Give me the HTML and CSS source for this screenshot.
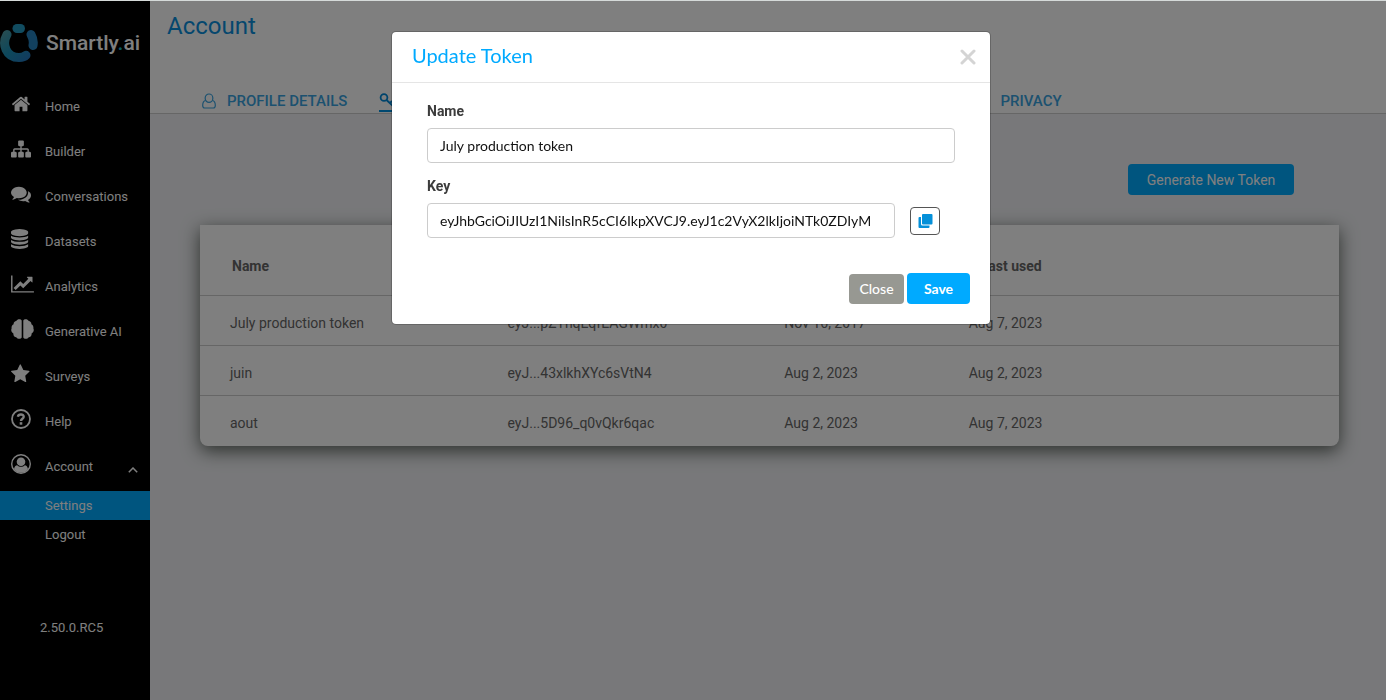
FILE: index.html
```html
<!DOCTYPE html>
<html lang="en">
<head>
<meta charset="utf-8">
<title>Smartly.ai - Account</title>
<link rel="stylesheet" href="styles.css">
</head>
<body>
<div class="app">
  <aside class="sidebar">
    <a class="brand" href="#">
      <svg class="brand-mark" viewBox="0 0 38 40" aria-hidden="true">
        <defs><linearGradient id="mark" gradientUnits="userSpaceOnUse" x1="6" y1="8" x2="30" y2="34"><stop offset="0" stop-color="#4a9aa6"/><stop offset=".5" stop-color="#1a90b8"/><stop offset="1" stop-color="#2478bc"/></linearGradient></defs>
        <g fill="none" stroke="url(#mark)" stroke-linecap="round" stroke-width="9">
          <path d="M7 11.500C1.500 21 6 34.500 19 34.500C22 34.500 24.500 33.800 26 32.200"/>
          <path d="M31 11.500C33 15 33.800 18.500 33 22.500" stroke="#2480bc"/>
          <path d="M17 5.500H20.500" stroke="#2398c0"/>
        </g>
      </svg>
      <span class="brand-name">Smartly<span class="brand-dot">.</span>ai</span>
    </a>
    <nav class="menu">
      <a class="menu-item" href="#"><svg class="menu-icon" viewBox="0 0 1792 1792"><path d="M1472 992v480q0 26-19 45t-45 19h-384v-384h-256v384h-384q-26 0-45-19t-19-45v-480q0-1 .5-3t.5-3l575-474 575 474q1 2 1 6zm223-69l-62 74q-8 9-21 11h-3q-13 0-21-7l-692-577-692 577q-12 8-24 7-13-2-21-11l-62-74q-8-10-7-23.500t11-21.500l719-599q32-26 76-26t76 26l244 204v-195q0-14 9-23t23-9h192q14 0 23 9t9 23v408l219 182q10 8 11 21.500t-7 23.500z"/></svg>Home</a>
      <a class="menu-item" href="#"><svg class="menu-icon" viewBox="0 0 1792 1792"><path d="M1792 1248v320q0 40-28 68t-68 28h-320q-40 0-68-28t-28-68v-320q0-40 28-68t68-28h96v-192h-512v192h96q40 0 68 28t28 68v320q0 40-28 68t-68 28h-320q-40 0-68-28t-28-68v-320q0-40 28-68t68-28h96v-192h-512v192h96q40 0 68 28t28 68v320q0 40-28 68t-68 28h-320q-40 0-68-28t-28-68v-320q0-40 28-68t68-28h96v-192q0-52 38-90t90-38h512v-192h-96q-40 0-68-28t-28-68v-320q0-40 28-68t68-28h320q40 0 68 28t28 68v320q0 40-28 68t-68 28h-96v192h512q52 0 90 38t38 90v192h96q40 0 68 28t28 68z"/></svg>Builder</a>
      <a class="menu-item" href="#"><svg class="menu-icon" viewBox="0 0 1792 1792"><path d="M1408 768q0 139-94 257t-256.500 186.500-353.500 68.500q-86 0-176-16-124 88-278 128-36 9-86 16h-3q-11 0-20.500-8t-11.500-21q-1-3-1-6.500t.5-6.500 2-6l2.500-5 3.500-5.500 4-5 4.500-5 4-4.500q5-6 23-25t26-29.500 22.500-29 25-38.500 20.500-44q-124-72-195-177t-71-224q0-139 94-257t256.500-186.500 353.500-68.500 353.500 68.500 256.500 186.500 94 257zm384 256q0 120-71 224.500t-195 176.500q10 24 20.500 44t25 38.500 22.500 29 26 29.500 23 25q1 1 4 4.500t4.500 5 4 5 3.500 5.500l2.500 5 2 6 .5 6.500-1 6.500q-3 14-13 22t-22 7q-50-7-86-16-154-40-278-128-90 16-176 16-271 0-472-132 58 4 88 4 161 0 309-45t264-129q125-92 192-212t67-254q0-77-23-152 129 71 204 178t75 230z"/></svg>Conversations</a>
      <a class="menu-item" href="#"><svg class="menu-icon" viewBox="128 0 1792 1792"><path d="M896 768q237 0 443-43t325-127v170q0 69-103 128t-280 93.500-385 34.500-385-34.500-280-93.500-103-128v-170q119 84 325 127t443 43zm0 768q237 0 443-43t325-127v170q0 69-103 128t-280 93.500-385 34.500-385-34.500-280-93.500-103-128v-170q119 84 325 127t443 43zm0-384q237 0 443-43t325-127v170q0 69-103 128t-280 93.500-385 34.500-385-34.500-280-93.500-103-128v-170q119 84 325 127t443 43zm0-1152q208 0 385 34.500t280 93.500 103 128v128q0 69-103 128t-280 93.500-385 34.500-385-34.500-280-93.500-103-128v-128q0-69 103-128t280-93.500 385-34.500z"/></svg>Datasets</a>
      <a class="menu-item" href="#"><svg class="menu-icon menu-icon-wide" viewBox="0 0 2048 1792"><path d="M2048 1536v128h-2048v-1536h128v1408h1920zm-128-1248v435q0 21-19.500 29.500t-35.500-7.500l-121-121-633 633q-10 10-23 10t-23-10l-233-233-416 416-192-192 585-585q10-10 23-10t23 10l233 233 464-464-121-121q-16-16-7.500-35.500t29.500-19.500h435q14 0 23 9t9 23z"/></svg>Analytics</a>
      <a class="menu-item" href="#"><svg class="menu-icon menu-icon-wide" viewBox="0 0 23 20"><path d="M10.700 1.500V18.500C10 20.300 6.500 20.300 5.300 18.300C3.300 18 2.200 16.500 2.400 14.500C0.500 13.300-.3 11.300.6 9.500C.3 7.300 1.300 6 2.600 5.300C2.500 3.500 3.800 2.300 5.300 2.100C6.200-.3 9.800-.5 10.700 1.500ZM12.300 1.500V18.500C13 20.300 16.500 20.300 17.700 18.300C19.700 18 20.800 16.500 20.600 14.500C22.500 13.300 23.300 11.300 22.400 9.500C22.700 7.300 21.700 6 20.400 5.300C20.500 3.500 19.200 2.300 17.700 2.100C16.800-.3 13.200-.5 12.300 1.500Z"/></svg>Generative AI</a>
      <a class="menu-item" href="#"><svg class="menu-icon" viewBox="64 0 1792 1792"><path d="M1728 647q0 22-26 48l-363 354 86 500q1 7 1 20 0 21-10.500 35.500t-30.500 14.500q-19 0-40-12l-449-236-449 236q-22 12-40 12-21 0-31.500-14.500t-10.500-35.500q0-6 2-20l86-500-364-354q-25-27-25-48 0-37 56-46l502-73 225-455q19-41 49-41t49 41l225 455 502 73q56 9 56 46z"/></svg>Surveys</a>
      <a class="menu-item" href="#"><svg class="menu-icon" viewBox="0 0 20 20"><circle cx="10" cy="10" r="9" fill="none" stroke="#fff" stroke-width="1.800"/><path d="M6.900 7.700C7.400 4.800 12.700 4.600 12.700 7.800C12.700 9.800 10 9.700 10 12" fill="none" stroke="#fff" stroke-width="2.400"/><path d="M8.700 13.200h2.600v2.500H8.700z"/></svg>Help</a>
      <a class="menu-item" href="#"><svg class="menu-icon" viewBox="0 0 20 20"><circle cx="10" cy="10" r="9.300" fill="none" stroke="#fff" stroke-width="1.400"/><circle cx="10" cy="7.800" r="4.300"/><path d="M3 15.200C3.400 12.600 4.600 11.300 6.200 11.200C8.300 13.200 11.700 13.200 13.800 11.200C15.400 11.300 16.600 12.600 17 15.200C13.600 20 6.400 20 3 15.200Z"/></svg>Account
        <svg class="menu-caret" viewBox="0 0 10 6"><path d="M.8 5.200L5 1L9.200 5.200" fill="none" stroke="#fff" stroke-width="1.500"/></svg></a>
      <div class="submenu">
        <a class="submenu-item submenu-item-active" href="#">Settings</a>
        <a class="submenu-item" href="#">Logout</a>
      </div>
    </nav>
    <p class="version">2.50.0.RC5</p>
  </aside>

  <main class="page">
    <header class="page-header">
      <h1 class="page-title">Account</h1>
      <nav class="tabs">
        <a class="tab" href="#"><svg class="tab-icon" viewBox="0 0 14 16"><g fill="none" stroke="currentColor" stroke-width="1.200"><rect x="3.200" y="1" width="7.600" height="8.400" rx="3.800"/><path d="M3.300 7.500C1.500 8 .7 10 .7 12.500C.7 14 1.500 15 2.700 15H11.300C12.500 15 13.300 14 13.300 12.500C13.300 10 12.500 8 10.700 7.500"/></g></svg>PROFILE DETAILS</a>
        <a class="tab tab-active" href="#" aria-label="Tokens"><svg class="tab-icon tab-icon-key" viewBox="0 0 16 16"><g fill="none" stroke="currentColor" stroke-width="1.800"><circle cx="5" cy="5.500" r="3.400"/><path d="M7.500 8L14 14M11 11L13 9"/></g></svg></a>
        <a class="tab" href="#"><svg class="tab-icon" viewBox="0 0 14 16"><path d="M2 7H12V14H2ZM4 7V4a3 3 0 0 1 6 0V7" fill="none" stroke="currentColor"/></svg>PRIVACY</a>
      </nav>
    </header>
    <section class="content">
      <div class="actions"><button class="btn-generate" type="button">Generate New Token</button></div>
      <div class="card">
        <table class="tokens">
          <thead><tr><th class="col-name">Name</th><th class="col-key"></th><th class="col-created"></th><th>Last used</th></tr></thead>
          <tbody>
            <tr><td>July production token</td><td>eyJ...pZThqEqfEAGWmx0</td><td>Nov 16, 2017</td><td>Aug 7, 2023</td></tr>
            <tr><td>juin</td><td>eyJ...43xlkhXYc6sVtN4</td><td>Aug 2, 2023</td><td>Aug 2, 2023</td></tr>
            <tr><td>aout</td><td>eyJ...5D96_q0vQkr6qac</td><td>Aug 2, 2023</td><td>Aug 7, 2023</td></tr>
          </tbody>
        </table>
      </div>
    </section>
  </main>
</div>

<div class="backdrop">
  <form class="modal" role="dialog" aria-labelledby="modal-title">
    <header class="modal-header">
      <h2 class="modal-title" id="modal-title">Update Token</h2>
      <button class="modal-close" type="button" aria-label="Dismiss"><svg class="modal-close-icon" viewBox="0 0 16 16"><path d="M2 2L14 14M14 2L2 14" stroke="#d4d4d4" stroke-width="3" stroke-linecap="round"/></svg></button>
    </header>
    <div class="modal-body">
      <label class="field-label" for="token-name">Name</label>
      <input class="field-input" id="token-name" type="text" value="July production token">
      <label class="field-label" for="token-key">Key</label>
      <div class="key-row">
        <input class="field-input" id="token-key" type="text" readonly value="eyJhbGciOiJIUzI1NiIsInR5cCI6IkpXVCJ9.eyJ1c2VyX2lkIjoiNTk0ZDIyM">
        <button class="btn-copy" type="button" aria-label="Copy key"><svg class="copy-icon" viewBox="0 0 15 15"><path d="M5 0H13.500Q14.500 0 14.500 1V9.500Q14.500 10.500 13.500 10.500H5Q4 10.500 4 9.500V1Q4 0 5 0ZM1.500 3H3V10Q3 11.500 4.500 11.500H11.500V13Q11.500 14 10.500 14H1.500Q.5 14 .5 13V4Q.5 3 1.500 3Z" fill="#0490d9"/></svg></button>
      </div>
    </div>
    <footer class="modal-footer">
      <button class="btn-close" type="button">Close</button>
      <button class="btn-save" type="submit">Save</button>
    </footer>
  </form>
</div>
</body>
</html>
```

FILE: styles.css
```css
* { box-sizing: border-box; }
body {
  margin: 0;
  border-top: 1px solid #d5dad9;
  background: #f0f1f4;
  font: 14px/20px Roboto, sans-serif;
  color: #666;
}
a { color: inherit; text-decoration: none; }
h1, h2, p { margin: 0; font-weight: 400; }
button, input { font: inherit; }

.app { display: flex; min-height: calc(100vh - 1px); }

.sidebar {
  flex: none;
  width: 150px;
  background: #000;
  color: #fff;
  font-size: 13px;
}
.brand { display: flex; align-items: center; gap: 8px; height: 83px; }
.brand-mark { width: 38px; height: 40px; }
.brand-name { font-size: 21px; line-height: 24px; font-weight: 500; }
.brand-dot { color: #19b5c8; }
.menu-item { display: flex; align-items: center; height: 45px; padding-left: 11px; }
.menu-icon { flex: none; width: 20px; height: 20px; margin: 0 14px 6px 0; fill: #fff; }
.menu-icon-wide { width: 23px; margin-right: 11px; }
.menu-caret { width: 10px; height: 6px; margin: 6px 12px 0 auto; }
.submenu { padding-top: 2px; }
.submenu-item { display: block; padding-left: 45px; line-height: 29px; }
.submenu-item-active { background: #00aaff; }
.version { margin: 69px 0 0 40px; }

.page { flex: 1; min-width: 0; }
.page-header { height: 113px; padding-left: 17px; background: #fff; border-bottom: 1px solid #ccc; }
.page-title { padding-top: 11px; font-size: 24px; line-height: 28px; color: #0a8fdc; }
.tabs { display: flex; margin-top: 48px; padding-left: 35px; color: #38a3e0; font-size: 15px; font-weight: 500; }
.tab { display: flex; align-items: center; height: 24px; padding-top: 2px; }
.tab-icon { width: 14px; height: 16px; margin-right: 11px; }
.tab-icon-key { width: 16px; }
.tab-active { width: 560px; margin: 0 36px 0 32px; border-bottom: 2px solid #0090e0; color: #0088d8; }

.content { padding: 50px 47px 0 50px; }
.actions { display: flex; justify-content: flex-end; padding-right: 45px; }
.btn-generate { min-width: 166px; height: 31px; padding: 0 16px; border: 0; border-radius: 4px; background: #00aaff; color: #fff; }
.card { margin-top: 30px; padding-bottom: 1px; background: #fff; border-radius: 0 0 8px 8px; box-shadow: 0 5px 18px rgba(40, 50, 40, .75); }
.tokens { width: 100%; table-layout: fixed; border-collapse: collapse; text-align: left; }
.tokens th { height: 70px; padding: 12px 0 0 12px; font-weight: 700; }
.tokens td { height: 50px; padding: 5px 0 0; }
.tokens td:first-child { padding-left: 30px; }
.tokens th:first-child { padding-left: 32px; }
.tokens th, .tokens td { border-bottom: 1px solid #ccc; }
.tokens tbody tr:last-child td { border-bottom: 0; }
.col-name { width: 27%; }
.col-key { width: 24.3%; }
.col-created { width: 16.2%; }

.backdrop {
  position: fixed;
  inset: 1px 0 0;
  padding: 30px 20px 0 16px;
  background: rgba(0, 0, 0, .5);
  font-family: Lato, sans-serif;
}
.modal {
  max-width: 600px;
  margin: 0 auto;
  border: 1px solid rgba(0, 0, 0, .2);
  border-radius: 5px;
  background: #fff;
  background-clip: padding-box;
}
.modal-header { display: flex; justify-content: space-between; align-items: center; height: 51px; padding: 0 14px 0 20px; border-bottom: 1px solid #e5e5e5; }
.modal-title { padding-bottom: 4px; font-size: 20px; line-height: 24px; color: #00aaff; }
.modal-close { display: flex; padding: 0; border: 0; background: none; }
.modal-close-icon { width: 16px; height: 16px; }
.modal-body { padding: 18px 35px 0; }
.field-label { display: block; margin-bottom: 7px; font: 700 14px/20px Roboto, sans-serif; color: #3c3c3c; }
.field-input { display: block; width: 100%; height: 35px; margin-bottom: 13px; padding: 0 12px; border: 1px solid #ccc; border-radius: 4px; background: #fff; color: #111; }
.key-row { display: flex; gap: 15px; padding-right: 15px; }
.key-row .field-input { flex: 1; min-width: 0; }
.btn-copy { display: flex; align-items: center; justify-content: center; width: 30px; height: 28px; margin-top: 4px; padding: 0; border: 1px solid #555; border-radius: 4px; background: #fff; }
.copy-icon { width: 15px; height: 15px; }
.modal-footer { display: flex; justify-content: flex-end; align-items: flex-end; gap: 3px; padding: 22px 20px 20px; }
.btn-close, .btn-save { padding: 0; border: 0; border-radius: 4px; color: #fff; }
.btn-close { width: 55px; height: 30px; background: #979892; font-weight: 500; }
.btn-save { width: 63px; height: 31px; background: #00aaff; font-weight: 700; }
```
